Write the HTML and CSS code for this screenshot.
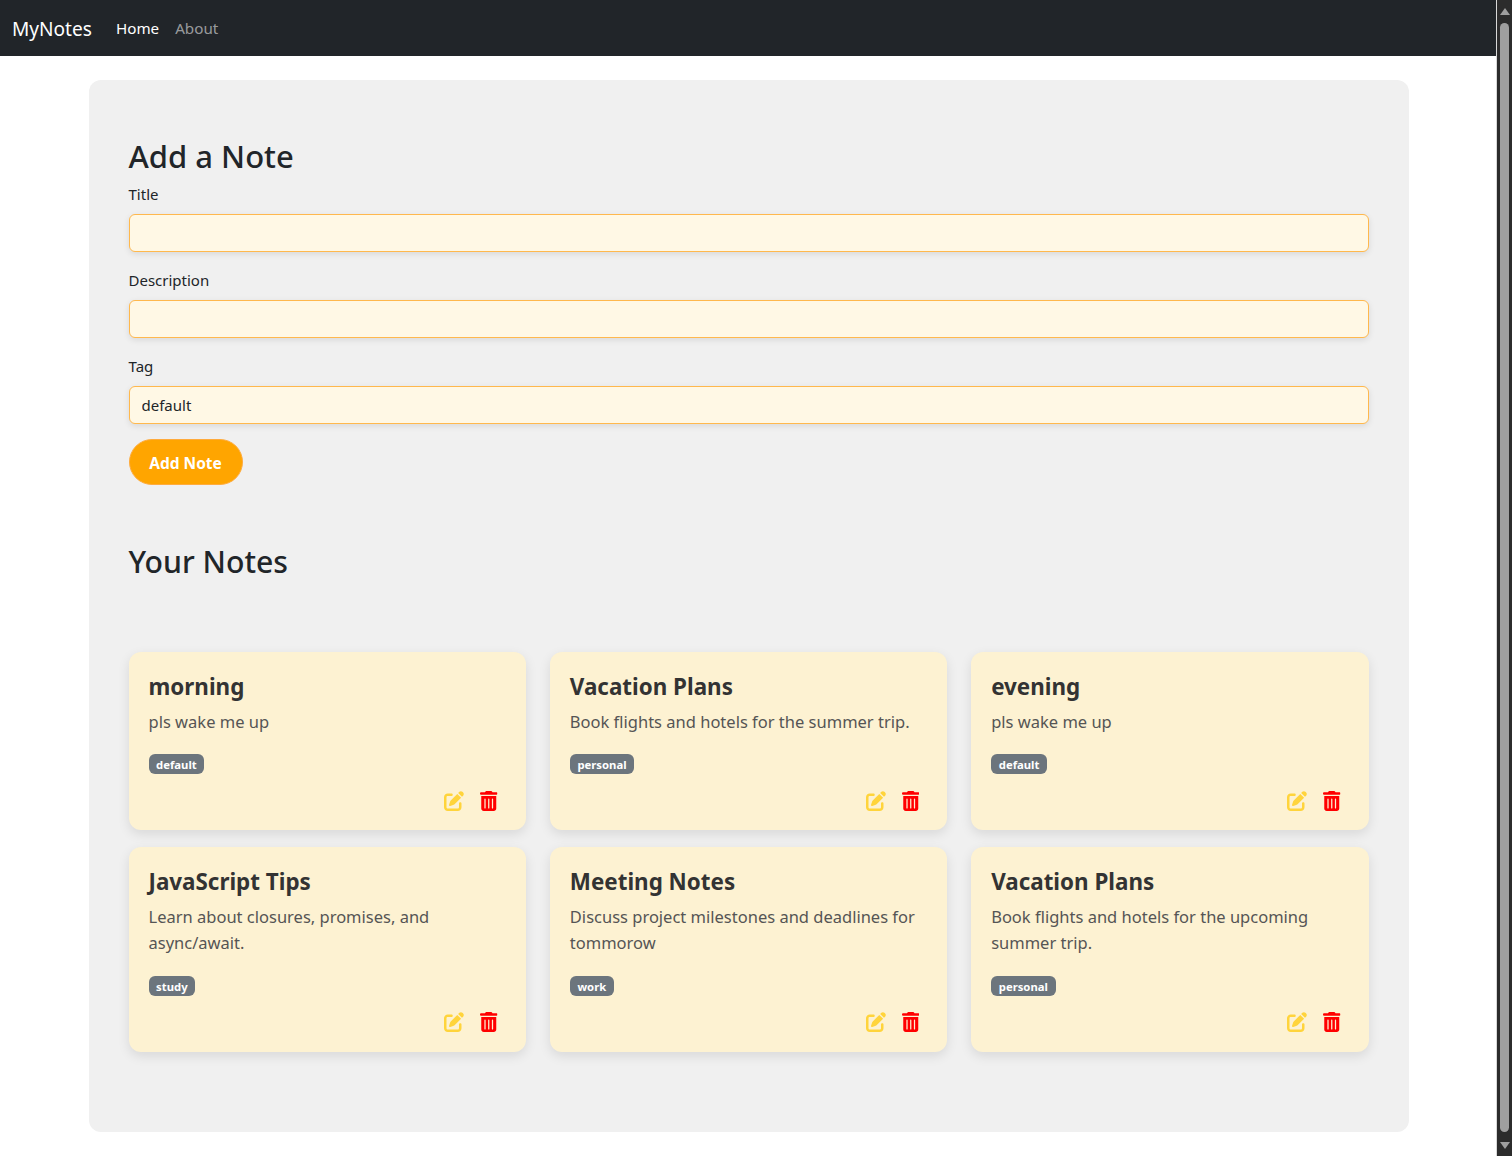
FILE: index.html
```html
<!DOCTYPE html>
<html lang="en">
<head>
<meta charset="utf-8">
<title>MyNotes</title>
<link rel="stylesheet" href="styles.css">
</head>
<body>
<svg class="sprite" aria-hidden="true">
  <symbol id="icon-edit" viewBox="0 0 512 512"><path d="M471.6 21.7c-21.9-21.9-57.3-21.9-79.2 0L362.3 51.7l97.9 97.9 30.1-30.1c21.9-21.9 21.9-57.3 0-79.2L471.6 21.7zm-299.2 220c-6.1 6.1-10.8 13.6-13.5 21.9l-29.6 88.8c-2.9 8.6-.6 18.1 5.8 24.6s15.9 8.7 24.6 5.8l88.8-29.6c8.2-2.7 15.7-7.4 21.9-13.5L437.7 172.3 339.7 74.3 172.4 241.7zM96 64C43 64 0 107 0 160V416c0 53 43 96 96 96H352c53 0 96-43 96-96V320c0-17.7-14.3-32-32-32s-32 14.3-32 32v96c0 17.7-14.3 32-32 32H96c-17.7 0-32-14.3-32-32V160c0-17.7 14.3-32 32-32h96c17.7 0 32-14.3 32-32s-14.3-32-32-32H96z"/></symbol>
  <symbol id="icon-trash" viewBox="0 0 448 512"><path d="M135.2 17.7C140.6 6.8 151.7 0 163.8 0H284.2c12.1 0 23.2 6.8 28.6 17.7L320 32h96c17.7 0 32 14.3 32 32s-14.3 32-32 32H32C14.3 96 0 81.7 0 64S14.3 32 32 32h96l7.2-14.3zM32 128H416V448c0 35.3-28.7 64-64 64H96c-35.3 0-64-28.7-64-64V128zm96 64c-8.8 0-16 7.2-16 16V432c0 8.8 7.2 16 16 16s16-7.2 16-16V208c0-8.8-7.2-16-16-16zm96 0c-8.8 0-16 7.2-16 16V432c0 8.8 7.2 16 16 16s16-7.2 16-16V208c0-8.8-7.2-16-16-16zm96 0c-8.8 0-16 7.2-16 16V432c0 8.8 7.2 16 16 16s16-7.2 16-16V208c0-8.8-7.2-16-16-16z"/></symbol>
</svg>
<div class="page">
  <nav class="navbar">
    <a class="brand" href="#">MyNotes</a>
    <a class="nav-link active" href="#">Home</a>
    <a class="nav-link" href="#">About</a>
  </nav>
  <main class="panel">
    <h2 class="heading">Add a Note</h2>
    <form class="note-form">
      <label class="label" for="title">Title</label>
      <input class="input" id="title" type="text">
      <label class="label" for="description">Description</label>
      <input class="input" id="description" type="text">
      <label class="label" for="tag">Tag</label>
      <input class="input input-last" id="tag" type="text" value="default">
      <button class="btn" type="button">Add Note</button>
    </form>
    <h2 class="heading heading-notes">Your Notes</h2>
    <section class="notes">
      <article class="card">
        <h5 class="card-title">morning</h5>
        <p class="card-text">pls wake me up</p>
        <span class="badge">default</span>
        <div class="actions">
          <svg class="icon icon-edit"><use href="#icon-edit"/></svg>
          <svg class="icon icon-trash"><use href="#icon-trash"/></svg>
        </div>
      </article>
      <article class="card">
        <h5 class="card-title">Vacation Plans</h5>
        <p class="card-text">Book flights and hotels for the summer trip.</p>
        <span class="badge">personal</span>
        <div class="actions">
          <svg class="icon icon-edit"><use href="#icon-edit"/></svg>
          <svg class="icon icon-trash"><use href="#icon-trash"/></svg>
        </div>
      </article>
      <article class="card">
        <h5 class="card-title">evening</h5>
        <p class="card-text">pls wake me up</p>
        <span class="badge">default</span>
        <div class="actions">
          <svg class="icon icon-edit"><use href="#icon-edit"/></svg>
          <svg class="icon icon-trash"><use href="#icon-trash"/></svg>
        </div>
      </article>
      <article class="card">
        <h5 class="card-title">JavaScript Tips</h5>
        <p class="card-text">Learn about closures, promises, and async/await.</p>
        <span class="badge">study</span>
        <div class="actions">
          <svg class="icon icon-edit"><use href="#icon-edit"/></svg>
          <svg class="icon icon-trash"><use href="#icon-trash"/></svg>
        </div>
      </article>
      <article class="card">
        <h5 class="card-title">Meeting Notes</h5>
        <p class="card-text">Discuss project milestones and deadlines for tommorow</p>
        <span class="badge">work</span>
        <div class="actions">
          <svg class="icon icon-edit"><use href="#icon-edit"/></svg>
          <svg class="icon icon-trash"><use href="#icon-trash"/></svg>
        </div>
      </article>
      <article class="card">
        <h5 class="card-title">Vacation Plans</h5>
        <p class="card-text">Book flights and hotels for the upcoming summer trip.</p>
        <span class="badge">personal</span>
        <div class="actions">
          <svg class="icon icon-edit"><use href="#icon-edit"/></svg>
          <svg class="icon icon-trash"><use href="#icon-trash"/></svg>
        </div>
      </article>
    </section>
  </main>
</div>
<aside class="scrollbar" aria-hidden="true">
  <span class="arrow-up"></span>
  <span class="thumb"></span>
  <span class="arrow-down"></span>
</aside>
</body>
</html>
```
FILE: styles.css
```css
* { box-sizing: border-box; }

html, body {
  margin: 0;
  height: 1156px;
  overflow: hidden;
}

body {
  display: flex;
  background: #fff;
  color: #212529;
  font-family: "Noto Sans", "Open Sans", sans-serif;
  font-size: 15px;
  line-height: 24px;
}

.sprite { display: none; }

.page {
  flex: 1;
  min-width: 0;
}

.navbar {
  display: flex;
  align-items: center;
  height: 56px;
  padding: 0 12px;
  background: #212529;
}

.brand {
  margin-right: 16px;
  padding-top: 2px;
  color: #fff;
  font-size: 19.1px;
  line-height: 30px;
  text-decoration: none;
}

.nav-link {
  padding: 8px;
  color: rgba(255, 255, 255, 0.55);
  font-size: 15.2px;
  text-decoration: none;
}

.nav-link.active { color: #fff; }

.panel {
  width: 1320px;
  height: 1052px;
  margin: 24px auto 0;
  padding: 56px 40px 80px;
  background: #f0f0f0;
  border-radius: 12px;
}

.heading {
  height: 38.4px;
  margin: 0 0 8px;
  padding-top: 1px;
  font-size: 31px;
  font-weight: 500;
  line-height: 38.4px;
}

.heading-notes {
  margin-top: 58px;
  margin-bottom: 70px;
  padding-top: 0;
  font-size: 30.2px;
}

.note-form { display: block; }

.label {
  display: block;
  height: 24px;
  margin-bottom: 8px;
}

.input {
  display: block;
  width: 100%;
  height: 38px;
  margin-bottom: 16px;
  padding: 6px 12px;
  background: #fff8e5;
  border: 1px solid #ffb84d;
  border-radius: 6px;
  box-shadow: 0 2px 6px rgba(0, 0, 0, 0.1);
  color: #212529;
  font: inherit;
}

.input-last { margin-bottom: 15px; }

.btn {
  display: block;
  width: 114px;
  height: 46px;
  padding: 2px 0 0;
  background: #ffa500;
  border: 1px solid #ffab3d;
  border-radius: 25px;
  color: #fff;
  font: inherit;
  font-size: 15.5px;
  font-weight: 700;
}

.notes {
  display: grid;
  grid-template-columns: repeat(3, 1fr);
  gap: 17px 24px;
  align-items: start;
}

.card {
  display: flex;
  flex-direction: column;
  align-items: flex-start;
  padding: 20px 20px 19.4px;
  background: #fdf2d2;
  border-radius: 12px;
  box-shadow: 0 4px 12px rgba(0, 0, 0, 0.1);
}

.card-title {
  margin: 0 0 8px;
  padding-top: 1px;
  height: 28.8px;
  font-size: 22.4px;
  font-weight: 700;
  line-height: 28.8px;
  color: #333;
}

.card-text {
  margin: 0 0 19px;
  font-size: 16.5px;
  line-height: 26.4px;
  color: #555;
}

.badge {
  height: 20.4px;
  padding: 0 7.6px;
  background: #6c757d;
  border-radius: 6px;
  color: #fff;
  font-size: 11.3px;
  font-weight: 700;
  line-height: 21px;
}

.actions {
  display: flex;
  justify-content: flex-end;
  align-self: stretch;
  margin-top: 16.2px;
}

.icon {
  display: block;
  height: 20px;
  margin: 0 8px;
}

.icon-edit {
  width: 20px;
  fill: #ffd43b;
}

.icon-trash {
  width: 17.5px;
  fill: #ff0000;
}

.scrollbar {
  flex: 0 0 15px;
  display: flex;
  flex-direction: column;
  align-items: center;
  padding: 8px 0 7px;
  background: #2c2c2c;
  box-shadow: -1px 0 0 #d8d8d8;
}

.arrow-up,
.arrow-down {
  flex: none;
  width: 0;
  height: 0;
  border-left: 5px solid transparent;
  border-right: 5px solid transparent;
}

.arrow-up {
  border-bottom: 7px solid #9f9f9f;
}

.arrow-down {
  margin-top: 10px;
  border-top: 7px solid #9f9f9f;
}

.thumb {
  flex: 1;
  width: 9px;
  margin-top: 8px;
  background: #9f9f9f;
  border-radius: 5px;
}
```
